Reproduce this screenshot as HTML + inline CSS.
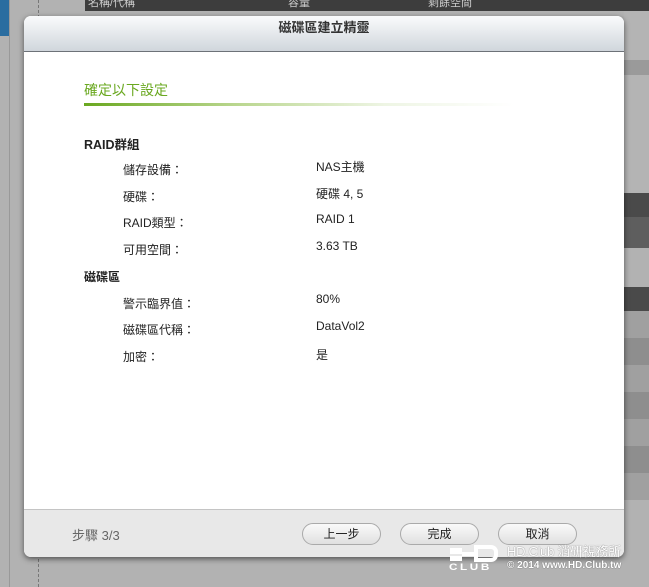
<!DOCTYPE html>
<html><head><meta charset="utf-8"><style>
*{margin:0;padding:0;box-sizing:border-box}
body{width:649px;height:587px;overflow:hidden;background:#b2b2b2;position:relative;font-family:"Liberation Sans","Noto Sans CJK TC",sans-serif}
.a{position:absolute}
.t{font-size:12px;color:#222}
.b{position:absolute;top:507px;width:79px;height:22px;border:1px solid #aaa;border-radius:11px;background:linear-gradient(#fafafa,#e0e0e0);font-size:12px;text-align:center;line-height:20px;color:#222}
.w{position:absolute;background:#fff}
</style></head><body>
<div class="a" style="left:0;top:0;width:9px;height:36px;background:#2a6da0"></div>
<div class="a" style="left:9px;top:0;width:1px;height:587px;background:#999"></div>
<div class="a" style="left:38px;top:0;height:587px;border-left:1px dashed #777"></div>
<div class="a" style="left:85px;top:0;width:564px;height:11px;background:#3d3d3d;color:#ccc;font-size:11px;line-height:6px;overflow:hidden"><span style="position:absolute;left:3px;top:0">名稱/代稱</span><span style="position:absolute;left:203px">容量</span><span style="position:absolute;left:343px">剩餘空間</span></div>
<div class="a" style="left:624px;top:11px;width:25px;height:119px;background:#b4b4b4"></div>
<div class="a" style="left:624px;top:60px;width:25px;height:15px;background:#9a9a9a"></div>
<div class="a" style="left:624px;top:130px;width:25px;height:63px;background:#b4b4b4"></div>
<div class="a" style="left:624px;top:193px;width:25px;height:24px;background:#4a4a4a"></div>
<div class="a" style="left:624px;top:217px;width:25px;height:31px;background:#5e5e5e"></div>
<div class="a" style="left:624px;top:248px;width:25px;height:39px;background:#b2b2b2"></div>
<div class="a" style="left:624px;top:287px;width:25px;height:24px;background:#4a4a4a"></div>
<div class="a" style="left:624px;top:311px;width:25px;height:27px;background:#a0a0a0"></div>
<div class="a" style="left:624px;top:338px;width:25px;height:27px;background:#8e8e8e"></div>
<div class="a" style="left:624px;top:365px;width:25px;height:27px;background:#a0a0a0"></div>
<div class="a" style="left:624px;top:392px;width:25px;height:27px;background:#8e8e8e"></div>
<div class="a" style="left:624px;top:419px;width:25px;height:27px;background:#a0a0a0"></div>
<div class="a" style="left:624px;top:446px;width:25px;height:27px;background:#8e8e8e"></div>
<div class="a" style="left:624px;top:473px;width:25px;height:27px;background:#a0a0a0"></div>
<div class="a" style="left:624px;top:500px;width:25px;height:87px;background:#b2b2b2"></div>

<div class="a" style="left:24px;top:16px;width:600px;height:541px;border-radius:7px;background:#fff;box-shadow:0 2px 6px rgba(0,0,0,.55);overflow:hidden">
 <div class="a" style="left:0;top:0;width:600px;height:36px;background:linear-gradient(#fafbfc,#d0d6dc);border-bottom:1px solid #6d7278;text-align:center;font-size:13px;font-weight:bold;color:#333;line-height:24px">磁碟區建立精靈</div>
 <div class="a" style="left:60px;top:64px;font-size:14px;color:#6aa820">確定以下設定</div>
 <div class="a" style="left:60px;top:87px;width:430px;height:3px;background:linear-gradient(90deg,#6aa820,#b9d68e 35%,#eef5e4 70%,rgba(255,255,255,0))"></div>
 <div class="a t" style="left:60px;top:118px;font-weight:bold;font-size:12.5px">RAID群組</div>
 <div class="a t" style="left:99px;top:145px">儲存設備：</div><div class="a t" style="left:292px;top:142px">NAS主機</div>
 <div class="a t" style="left:99px;top:172px">硬碟：</div><div class="a t" style="left:292px;top:169px">硬碟 4, 5</div>
 <div class="a t" style="left:99px;top:198px">RAID類型：</div><div class="a t" style="left:292px;top:196px">RAID 1</div>
 <div class="a t" style="left:99px;top:225px">可用空間：</div><div class="a t" style="left:292px;top:223px">3.63 TB</div>
 <div class="a t" style="left:60px;top:252px;font-weight:bold">磁碟區</div>
 <div class="a t" style="left:99px;top:279px">警示臨界值：</div><div class="a t" style="left:292px;top:276px">80%</div>
 <div class="a t" style="left:99px;top:305px">磁碟區代稱：</div><div class="a t" style="left:292px;top:303px">DataVol2</div>
 <div class="a t" style="left:99px;top:332px">加密：</div><div class="a t" style="left:292px;top:330px">是</div>
 <div class="a" style="left:0;top:493px;width:600px;height:48px;background:#e8e8e8;border-top:1px solid #c4c4c4"></div>
 <div class="a" style="left:48px;top:509px;font-size:13px;color:#666">步驟 3/3</div>
 <div class="b" style="left:278px">上一步</div>
 <div class="b" style="left:376px">完成</div>
 <div class="b" style="left:474px">取消</div>
</div>
<!-- watermark -->
<div class="w" style="left:450px;top:548px;width:12px;height:6px"></div>
<div class="w" style="left:450px;top:556px;width:12px;height:5px"></div>
<div class="w" style="left:462px;top:552px;width:12px;height:4px"></div>
<div class="a" style="left:474px;top:545px;width:24px;height:17px;border:4px solid #fff;border-left:none;border-radius:0 7px 7px 0"></div>
<div class="w" style="left:474px;top:545px;width:4px;height:17px"></div>
<div class="a" style="left:449px;top:562px;font-size:9px;font-weight:bold;color:#fff;letter-spacing:2px;transform:scaleX(1.3);transform-origin:left">CLUB</div>
<div class="a" style="left:507px;top:541px;font-size:13px;color:#fff;text-shadow:0 0 1px #555;letter-spacing:-0.3px">HD.Club 消研視務所</div>
<div class="a" style="left:507px;top:560px;font-size:10px;font-weight:bold;color:#fff;text-shadow:0 0 1px #444">© 2014 www.HD.Club.tw</div>
</body></html>
